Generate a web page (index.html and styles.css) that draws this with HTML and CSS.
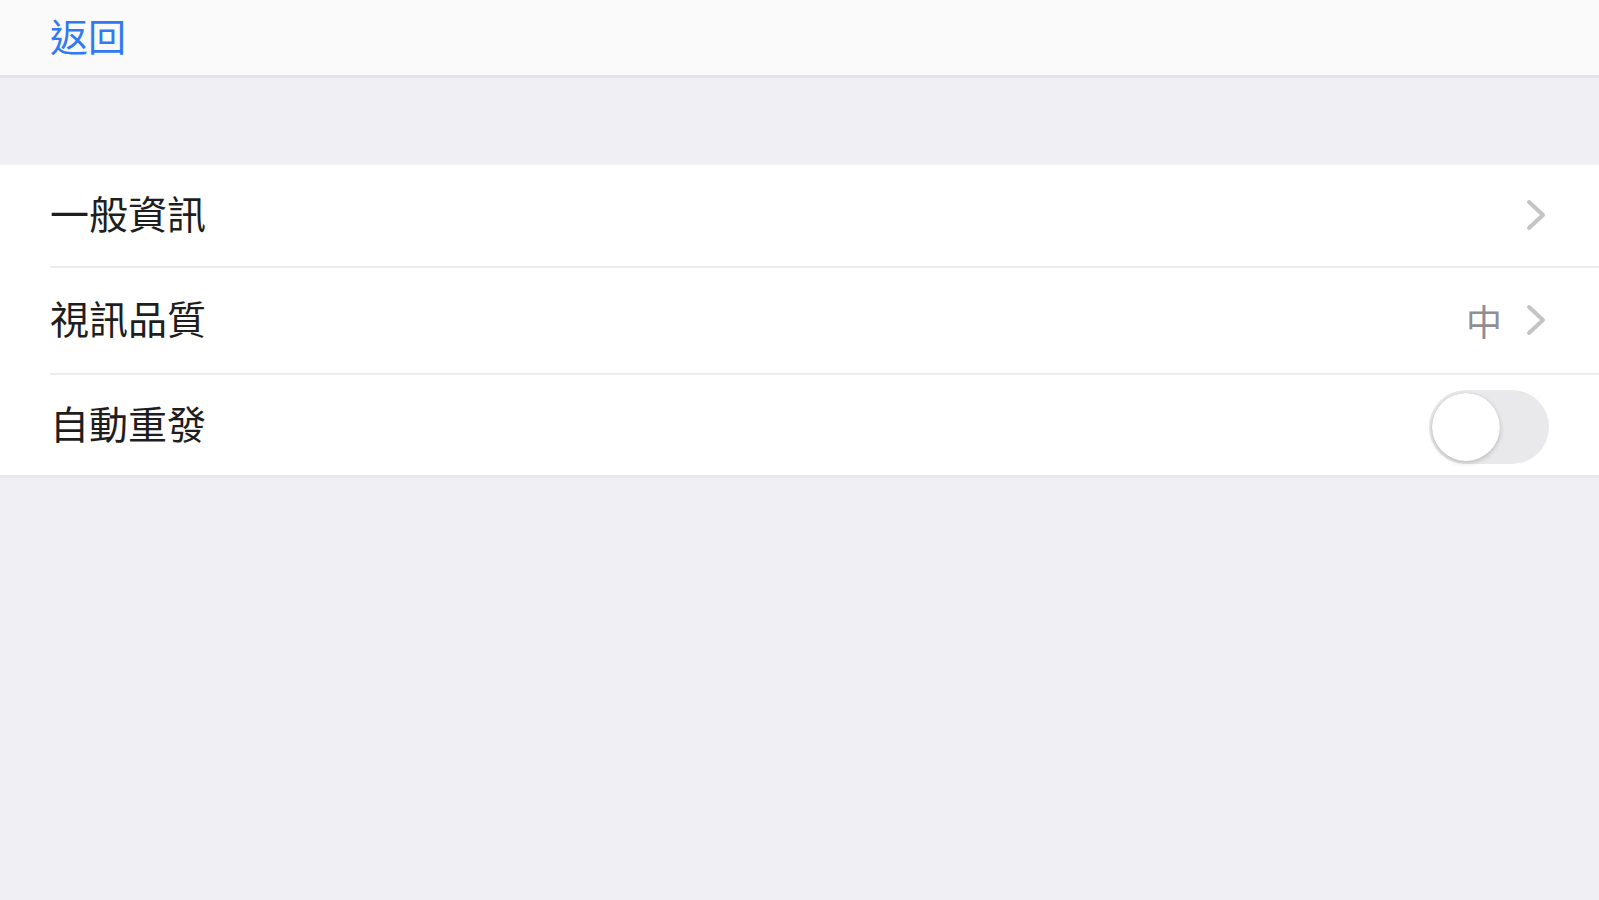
FILE: index.html
```html
<!DOCTYPE html>
<html lang="zh-Hant">
<head>
<meta charset="utf-8">
<title>設定</title>
<link rel="stylesheet" href="styles.css">
</head>
<body>
<header class="navbar">
  <span class="back">返回</span>
</header>
<section class="list">
  <div class="row">
    <div class="row-inner first">
      <span class="label">一般資訊</span>
      <span class="accessory">
        <svg class="chevron" width="20" height="32" viewBox="0 0 20 32"><polyline points="3,3 17,16 3,29" fill="none" stroke="#c4c4c7" stroke-width="4" stroke-linecap="round" stroke-linejoin="round"/></svg>
      </span>
    </div>
  </div>
  <div class="row">
    <div class="row-inner middle">
      <span class="label">視訊品質</span>
      <span class="accessory">
        <span class="value">中</span>
        <svg class="chevron" width="20" height="32" viewBox="0 0 20 32"><polyline points="3,3 17,16 3,29" fill="none" stroke="#c4c4c7" stroke-width="4" stroke-linecap="round" stroke-linejoin="round"/></svg>
      </span>
    </div>
  </div>
  <div class="row">
    <div class="row-inner last">
      <span class="label">自動重發</span>
      <span class="toggle"><span class="knob"></span></span>
    </div>
  </div>
</section>
</body>
</html>
```

FILE: styles.css
```css
html, body {
  margin: 0;
  padding: 0;
}
body {
  background: #efeff4;
  font-family: "Noto Sans CJK TC", "Noto Sans", sans-serif;
  height: 900px;
  overflow: hidden;
}
.navbar {
  height: 75px;
  background: #fafafa;
  border-bottom: 3px solid #e4e4e8;
  display: flex;
  align-items: center;
  padding-left: 50px;
}
.back {
  color: #3079f2;
  font-size: 38px;
  line-height: 1;
  padding-bottom: 5px;
}
.list {
  margin-top: 87px;
  background: #ffffff;
  border-bottom: 3px solid #e9e9ed;
}
.row {
  padding-left: 50px;
}
.row-inner {
  border-bottom: 2px solid #ececef;
  display: flex;
  align-items: center;
  justify-content: space-between;
  padding-right: 50px;
}
.row-inner.first {
  height: 101px;
}
.row-inner.middle {
  height: 105px;
}
.row-inner.last {
  border-bottom: none;
  height: 100px;
}
.label {
  font-size: 39px;
  color: #1e1e1e;
  line-height: 1;
  padding-bottom: 6px;
}
.accessory {
  display: flex;
  align-items: center;
  gap: 24px;
  padding-right: 3px;
  padding-bottom: 2px;
}
.value {
  font-size: 36px;
  color: #8e8e93;
  line-height: 1;
}
.chevron {
  display: block;
}
.toggle {
  width: 120px;
  height: 74px;
  box-sizing: border-box;
  border-radius: 37px;
  background: #e9e9eb;
  display: flex;
  align-items: center;
  padding: 3px;
  margin-top: 3px;
}
.knob {
  width: 68px;
  height: 68px;
  border-radius: 50%;
  background: #ffffff;
  box-shadow: 0 2px 5px rgba(0,0,0,0.18), 0 0 1px rgba(0,0,0,0.2);
}
```
